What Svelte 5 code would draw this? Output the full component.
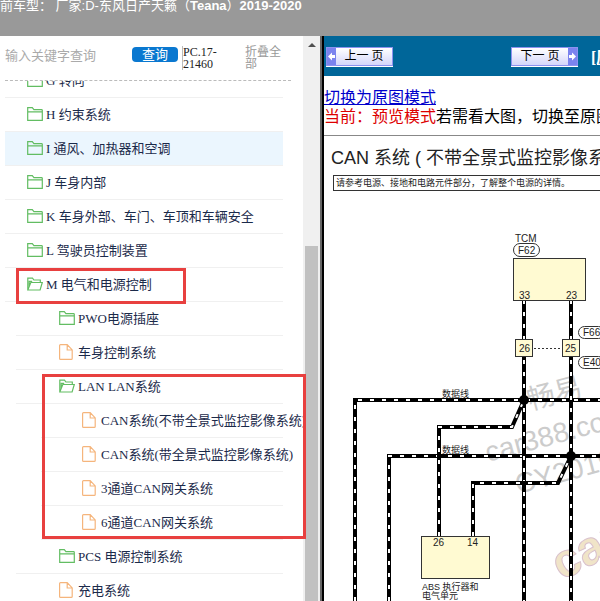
<script>
    let keyword = $state('');
    let hovered = $state('I');

    const tree = [
        { id: 'G', label: 'G 转向', type: 'closed' },
        { id: 'H', label: 'H 约束系统', type: 'closed' },
        { id: 'I', label: 'I 通风、加热器和空调', type: 'closed' },
        { id: 'J', label: 'J 车身内部', type: 'closed' },
        { id: 'K', label: 'K 车身外部、车门、车顶和车辆安全', type: 'closed' },
        { id: 'L', label: 'L 驾驶员控制装置', type: 'closed' },
        {
            id: 'M',
            label: 'M 电气和电源控制',
            type: 'open',
            children: [
                { id: 'PWO', label: 'PWO电源插座', type: 'closed' },
                { id: 'BCS', label: '车身控制系统', type: 'file' },
                {
                    id: 'LAN',
                    label: 'LAN LAN系统',
                    type: 'open',
                    children: [
                        { id: 'CAN1', label: 'CAN系统(不带全景式监控影像系统)', type: 'file' },
                        { id: 'CAN2', label: 'CAN系统(带全景式监控影像系统)', type: 'file' },
                        { id: 'CAN3', label: '3通道CAN网关系统', type: 'file' },
                        { id: 'CAN6', label: '6通道CAN网关系统', type: 'file' }
                    ]
                },
                { id: 'PCS', label: 'PCS 电源控制系统', type: 'closed' },
                { id: 'CHG', label: '充电系统', type: 'file' }
            ]
        }
    ];

    // data lines of the CAN bus
    const wires = [
        'M355 601V400H620',
        'M389 601V456H620',
        'M524 300V601',
        'M571 300V601',
        'M439 536V427H512L524 400',
        'M473 536V483H558L571 456'
    ];
</script>

{#snippet icon(type)}
    {#if type === 'file'}
        <svg class="icon file" viewBox="0 0 16 16" width="16" height="16" aria-hidden="true">
            <path d="M1.500 .7h6.700l5 5.200v8.500q0 .9-.9.9H1.500q-.9 0-.9-.9V1.600q0-.9.9-.9zM8.200 .7V6h5" />
        </svg>
    {:else if type === 'open'}
        <svg class="icon folder" viewBox="0 0 16 16" width="16" height="16" aria-hidden="true">
            <path d="M.8 14V2.200h4.700l1.400 1.800h6.400v2.500M.8 14L3.800 6.500h11.500l-2.200 7.500zM2.200 10V5.300h3" />
        </svg>
    {:else}
        <svg class="icon folder" viewBox="0 0 16 16" width="16" height="16" aria-hidden="true">
            <path d="M.7 1.700h4.600l1.600 2h7.600q.8 0 .8.8v9.800H.7zM.7 5.900h14.600" />
        </svg>
    {/if}
{/snippet}

{#snippet branch(nodes)}
    <ul>
        {#each nodes as node (node.id)}
            <li>
                <button
                    class="node"
                    class:active={hovered === node.id}
                    onmouseenter={() => (hovered = node.id)}
                >
                    {@render icon(node.type)}
                    <span>{node.label}</span>
                </button>
                {#if node.children}
                    {@render branch(node.children)}
                {/if}
            </li>
        {/each}
    </ul>
{/snippet}

<div class="page">
    <header>前车型： 厂家:D-东风日产天籁（<b>Teana</b>）<b>2019-2020</b></header>

    <div class="layout">
        <aside>
            <div class="search">
                <input type="text" placeholder="输入关键字查询" aria-label="输入关键字查询" bind:value={keyword} />
                <button class="query">查询</button>
                <span class="code">PC.17-21460</span>
                <button class="collapse">折叠全部</button>
            </div>
            <nav class="tree">
                {@render branch(tree)}
            </nav>
        </aside>

        <div class="scrollbar">
            <span class="arrow"></span>
            <span class="thumb"></span>
        </div>

        <main>
            <div class="toolbar">
                <button class="pager">
                    <svg viewBox="0 0 9 17" width="9" height="17" aria-hidden="true"><path d="M1 8.500l4-4v2.500h3v3H5v2.500z" /></svg>
                    <span>上一 页</span>
                </button>
                <button class="pager next">
                    <span>下一 页</span>
                    <svg viewBox="0 0 9 17" width="9" height="17" aria-hidden="true"><path d="M8 8.500l-4-4v2.500H1v3h3v2.500z" /></svg>
                </button>
                <a class="origin" href="#origin">[原图]</a>
            </div>

            <div class="mode">
                <a href="#full">切换为原图模式</a>
                <p><em>当前：预览模式</em>若需看大图，切换至原图模式</p>
            </div>

            <svg class="diagram" viewBox="324 136 400 480" width="400" height="480">
                <g class="watermark">
                    <text transform="translate(530 410) rotate(-15)">畅易</text>
                    <text transform="translate(488 462) rotate(-15)">car388.com</text>
                    <text transform="translate(518 494) rotate(-15)">CY2019</text>
                </g>
                <text transform="translate(562 581) rotate(-28)" class="logo">car</text>

                <text x="331" y="164" class="title">CAN 系统 ( 不带全景式监控影像系统 )</text>
                <rect x="333.500" y="175.500" width="380" height="15" class="box" />
                <text x="336" y="186" class="small">请参考电源、接地和电路元件部分，了解整个电源的详情。</text>

                {#each wires as d}
                    <path {d} class="wire" />
                    <path {d} class="dash" />
                {/each}
                <circle cx="524" cy="400" r="5" class="joint" />
                <circle cx="571" cy="456" r="5" class="joint" />

                <rect x="513.500" y="258.500" width="72" height="42" class="unit" />
                <text x="515" y="242">TCM</text>
                <rect x="513.500" y="243.500" width="26" height="13" rx="6.500" class="box" />
                <text x="518" y="254">F62</text>
                <text x="519" y="299">33</text>
                <text x="566" y="299">23</text>

                <rect x="515.500" y="339.500" width="17" height="17" class="unit" />
                <rect x="562.500" y="339.500" width="17" height="17" class="unit" />
                <path d="M534 348.500h28" class="link" />
                <text x="519" y="352">26</text>
                <text x="565" y="352">25</text>
                <rect x="578.500" y="326.500" width="26" height="12" rx="6" class="box" />
                <text x="583" y="336">F66</text>
                <rect x="578.500" y="356.500" width="26" height="12" rx="6" class="box" />
                <text x="583" y="366">E40</text>

                <text x="442" y="397" class="small">数据线</text>
                <text x="442" y="453" class="small">数据线</text>

                <rect x="421.500" y="536.500" width="68" height="42" class="unit" />
                <text x="433" y="546">26</text>
                <text x="467" y="546">14</text>
                <text x="422" y="590" class="small">ABS 执行器和</text>
                <text x="422" y="599" class="small">电气单元</text>
            </svg>
        </main>

        <div class="mark mark-group"></div>
        <div class="mark mark-lan"></div>
    </div>
</div>

<style>
    :global(body) {
        margin: 0;
    }

    .page {
        display: flex;
        flex-direction: column;
        height: 100vh;
        overflow: hidden;
        background: #fff;
    }

    header {
        height: 36px;
        flex: none;
        background: #999;
        color: #fff;
        font: 13px/12px "Liberation Sans", "Noto Sans CJK SC", sans-serif;
        white-space: nowrap;
    }

    .layout {
        position: relative;
        display: flex;
        flex: 1;
        min-height: 0;
    }

    aside {
        display: flex;
        flex-direction: column;
        width: 303px;
        flex: none;
        overflow: hidden;
        font-family: "Liberation Serif", "Noto Sans CJK SC", serif;
    }

    button,
    input {
        margin: 0;
        padding: 0;
        border: 0;
        background: none;
        font: inherit;
    }

    .search {
        display: flex;
        align-items: flex-start;
        height: 34px;
        flex: none;
        margin: 0 12px 0 5px;
        padding-top: 10px;
        border-bottom: 1px dashed #bbb;
    }

    .search input {
        width: 127px;
        height: 20px;
        font-size: 13px;
        color: #333;
    }

    .search input::placeholder {
        color: #aaa;
        opacity: 1;
    }

    .query {
        width: 46px;
        height: 15px;
        margin: 1px 4px 0 0;
        border-radius: 4px;
        background: #0a78d0;
        color: #fff;
        font-size: 13px;
        line-height: 15px;
    }

    .code {
        width: 40px;
        border-left: 1px solid #bbb;
        color: #222;
        font-size: 12px;
        line-height: 12px;
    }

    .collapse {
        width: 40px;
        margin-left: 22px;
        color: #999;
        font-size: 12px;
        line-height: 12px;
        text-align: left;
    }

    .tree {
        flex: 1;
        min-height: 0;
        overflow: hidden;
    }

    ul {
        margin: 0;
        padding: 0;
        list-style: none;
    }

    /* the list is scrolled half a row down */
    .tree > ul {
        margin: -17px 20px 0 5px;
    }

    .node {
        display: flex;
        align-items: center;
        gap: 3px;
        box-sizing: border-box;
        width: 100%;
        height: 34px;
        padding: 0 0 2px 22px;
        border-bottom: 1px solid #f0f0f0;
        color: #1b2a4a;
        font-size: 13px;
        white-space: nowrap;
        text-align: left;
        cursor: pointer;
    }

    .node.active {
        background: #ebf6fe;
    }

    ul ul {
        margin-left: 11px;
    }

    ul ul .node {
        padding-left: 43px;
    }

    ul ul ul {
        margin-left: 25px;
    }

    ul ul ul .node {
        padding-left: 41px;
    }

    .icon {
        flex: none;
        fill: none;
        stroke-width: 1.2;
    }

    .folder {
        stroke: #62bd62;
    }

    .file {
        stroke: #f5b57c;
    }

    .scrollbar {
        display: flex;
        flex-direction: column;
        align-items: center;
        width: 17px;
        flex: none;
        background: #f0f0f0;
    }

    .arrow {
        margin-top: 7px;
        border: 4px solid transparent;
        border-top: 0;
        border-bottom: 4px solid #505050;
    }

    .thumb {
        flex: 1;
        width: 13px;
        margin-top: 199px;
        background: #c1c1c1;
    }

    main {
        flex: 1;
        min-width: 0;
        overflow: hidden;
        margin-left: 2px;
        border-left: 2px solid #000;
        box-shadow: -2px 0 #666;
        font-family: "Liberation Serif", "Noto Sans CJK SC", serif;
    }

    .toolbar {
        display: flex;
        align-items: center;
        height: 40px;
        padding-left: 2px;
        background: #006699;
        white-space: nowrap;
    }

    .pager {
        display: flex;
        align-items: center;
        box-sizing: border-box;
        width: 67px;
        height: 19px;
        flex: none;
        border: 1px solid #8c92f0;
        background: linear-gradient(#fff, #d4d6fa);
        color: #000;
        font-size: 12px;
        line-height: 17px;
        box-shadow: 0 1px #fff;
    }

    .pager span {
        flex: 1;
        text-align: center;
    }

    .pager svg {
        flex: none;
        background: #7b83ee;
        fill: #fff;
    }

    .next {
        margin-left: 118px;
    }

    .origin {
        margin-left: 13px;
        color: #fff;
        font-size: 16px;
        font-weight: bold;
    }

    .mode {
        padding: 12px 0 9px;
        border-bottom: 1px solid #888;
        font-size: 16px;
        line-height: 19px;
        white-space: nowrap;
    }

    .mode a {
        color: #0000cc;
    }

    .mode p {
        margin: 0;
    }

    .mode em {
        color: #d00;
        font-style: normal;
    }

    .diagram {
        display: block;
        font: 10px "Liberation Sans", "Noto Sans CJK SC", sans-serif;
        fill: #222;
    }

    .title {
        font-size: 18px;
    }

    .small {
        font-size: 9px;
    }

    .box {
        fill: none;
        stroke: #333;
    }

    .unit {
        fill: #fffad2;
        stroke: #333;
    }

    .wire {
        fill: none;
        stroke: #000;
        stroke-width: 4;
    }

    .dash {
        fill: none;
        stroke: #fff;
        stroke-width: 2;
        stroke-dasharray: 4 8;
    }

    .joint {
        fill: #000;
    }

    .link {
        stroke: #333;
        stroke-dasharray: 2 2;
    }

    .watermark {
        font-size: 28px;
        fill: #ccc;
    }

    .logo {
        font-size: 48px;
        font-weight: bold;
        fill: #f0e4c8;
        stroke: #d8c0cc;
    }

    /* red frames laid over the tree */
    .mark {
        position: absolute;
        box-sizing: border-box;
        border: 3px solid #e8403f;
        pointer-events: none;
    }

    .mark-group {
        left: 16px;
        top: 232px;
        width: 170px;
        height: 36px;
    }

    .mark-lan {
        left: 42px;
        top: 338px;
        width: 264px;
        height: 165px;
    }
</style>
